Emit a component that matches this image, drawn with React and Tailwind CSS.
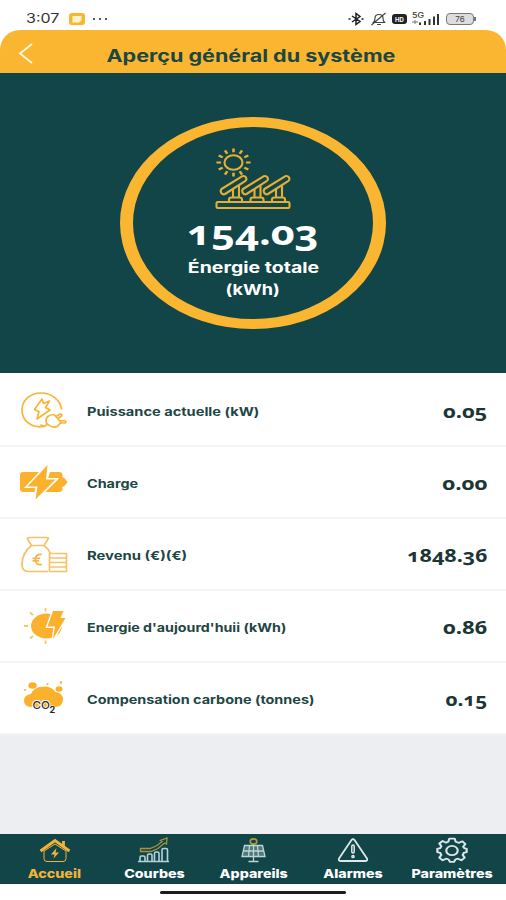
const rows = [
  { label: 'Puissance actuelle (kW)', value: '0.05', icon: PowerIcon, stretch: 'scale-x-[1.217]', valueStretch: 'scale-x-[1.22]' },
  { label: 'Charge', value: '0.00', icon: BatteryIcon, stretch: 'scale-x-[1.2]', valueStretch: 'scale-x-[1.24]' },
  { label: 'Revenu (€)(€)', value: '1848.36', icon: MoneyIcon, stretch: 'scale-x-[1.235]', valueStretch: 'scale-x-[1.19]' },
  { label: "Energie d'aujourd'huii (kWh)", value: '0.86', icon: SunBoltIcon, stretch: 'scale-x-[1.185]', valueStretch: 'scale-x-[1.22]' },
  { label: 'Compensation carbone (tonnes)', value: '0.15', icon: CarbonIcon, stretch: 'scale-x-[1.2]', valueStretch: 'scale-x-[1.15]' },
]

const tabs = [
  { label: 'Accueil', icon: HomeIcon, active: true },
  { label: 'Courbes', icon: ChartIcon },
  { label: 'Appareils', icon: PanelIcon },
  { label: 'Alarmes', icon: AlarmIcon },
  { label: 'Paramètres', icon: GearIcon },
]

const sunRays = Array.from({ length: 12 }, (_, i) => i * 30)

function SolarIcon() {
  return (
    <svg width="76" height="62" viewBox="0 0 76 62" fill="none" stroke="#e5ae35" strokeWidth="2.1" strokeLinejoin="round">
      <ellipse cx="18.5" cy="14.5" rx="9" ry="7.2" />
      <g transform="translate(18.5 14.5) scale(1.22 1)">
        {sunRays.map(a => (
          <path key={a} d="M0 -10.2V-14" transform={`rotate(${a})`} />
        ))}
      </g>
      {[0, 21.5, 43].map(x => (
        <g key={x} transform={`translate(${x} 0)`}>
          <path d="M6.500 41 27 28.300Q29.500 27.300 31 29.300Q32 31.600 30.500 32.800L10 46Q8 47 6.300 45Q5 42.800 6.500 41Z" />
          <path d="M18 41V49.500M24 37.500V49.500M14 53.500V51.500Q14 49.500 16.500 49.500H24.500Q27 49.500 27 51.500V53.500" />
        </g>
      ))}
      <rect x="1.5" y="54" width="73" height="6" rx="1.2" />
    </svg>
  )
}

function PowerIcon() {
  return (
    <svg width="50" height="40" viewBox="0 0 50 40" fill="none" stroke="#fab431" strokeWidth="1.7" strokeLinejoin="round" strokeLinecap="round">
      <path d="M26 36.500C13 38.500 4 30.500 4 20C4 10.500 12 3 23 3S42.500 10.500 43.500 19" />
      <path d="M24 9 16.500 19.500 21 21.500 19 29 32 20 27.500 17.500 31.500 11 25.500 13.500Z" />
      <path d="M23 35Q27 37.500 29.500 34Q34.500 39 40 36L43 32L36 24.500Q27.500 25 28 31.500Q28 33 29.500 34M38 26.500 42 24M41.500 31 46 30.500M42 24Q44.500 24 43.500 26L40 28.500M46 30.500Q49 31.500 47 33L43 33" />
    </svg>
  )
}

function BatteryIcon() {
  return (
    <svg width="50" height="40" viewBox="0 0 50 40" fill="#fbb12c">
      <path d="M5 10H23L11 25H17.500L16.500 30H5Q2 30 2 27V13Q2 10 5 10Z" />
      <path d="M32 10H41Q44.500 10 44.500 13V15.500H46L49.500 20L46 24.500H44.500V27Q44.500 30 41 30H27L41 16.500H30Z" />
      <path d="M29.500 3 9.500 24.500H19.500L17.500 37.500L37.500 17.500H28Z" stroke="#fff" strokeWidth="3" paintOrder="stroke" />
    </svg>
  )
}

function MoneyIcon() {
  return (
    <svg width="50" height="40" viewBox="0 0 50 40" fill="none" stroke="#f5c268" strokeWidth="1.7" strokeLinejoin="round">
      <path d="M13.500 11.500 9.500 5Q9 3.500 11.500 3.500H28.500Q31 3.500 30 5L26 11.500ZM13.500 11.500Q4 19 4 30.500Q4 37.500 10 37.500H30M26 11.500Q30.500 15 32.500 19.500" />
      <path d="M32.500 19.500H48.500V37.500H31.500V19.500ZM31.500 24H48.500M31.500 28.500H48.500M31.500 33H48.500" />
      <path d="M24 20.500Q17.500 19.500 17.500 25.500T24 30.500M14.500 24.400H22M14.500 26.800H21" stroke="#f4b549" />
    </svg>
  )
}

function SunBoltIcon() {
  return (
    <svg width="50" height="40" viewBox="0 0 50 40">
      <ellipse cx="28.500" cy="20" rx="15.500" ry="12.500" fill="#fbb12c" />
      <path d="M27.500 2V5.500M12 6.500 15 9M6 20H10M12 32.500 15 30M27.500 34.500V38" stroke="#f8c467" strokeWidth="1.8" />
      <path d="M35 5H45.500L42.500 12H47.500L35 33L37 20.500H29.500Z" fill="#fbb12c" stroke="#fff" strokeWidth="2.8" paintOrder="stroke" />
    </svg>
  )
}

function CarbonIcon() {
  return (
    <svg width="50" height="40" viewBox="0 0 50 40" fill="#fbb12c">
      <path d="M12 29Q6 28 6 22.500Q6 17 13 16Q16 8.500 26 8.500Q34 8.500 37.500 14Q45 15 45 21.500Q45 28 38 29Z" />
      <ellipse cx="14.500" cy="7.500" rx="4.200" ry="3.300" />
      <ellipse cx="41" cy="11" rx="3.500" ry="2.800" />
      <circle cx="29.500" cy="6" r="1" />
      <circle cx="43" cy="4.500" r="1.300" />
      <circle cx="7" cy="12" r="1" />
      <text x="14.500" y="31" textLength="17.500" lengthAdjust="spacingAndGlyphs" fontFamily="Inter, sans-serif" fontSize="11" fontWeight="500" fill="#333" stroke="#fff" strokeWidth="1.8" paintOrder="stroke">CO</text>
      <text x="31.500" y="35" fontFamily="Inter, sans-serif" fontSize="9" fontWeight="700" fill="#222" stroke="#fff" strokeWidth="1" paintOrder="stroke">2</text>
    </svg>
  )
}

function HomeIcon() {
  return (
    <svg width="32" height="26" viewBox="0 0 32 26" fill="none" stroke="#f2b33d">
      <path d="M1.500 14 16 3.500 30.500 14M24.500 9.500V4" strokeWidth="2.8" />
      <path d="M5 14V21.500Q5 24.500 8 24.500H24Q27 24.500 27 21.500V14L16 7Z" strokeWidth="1" />
      <path d="M17.500 11 12 17.500H15.500L14.500 21.500L20 15.500H16.500Z" fill="#f2b33d" stroke="none" />
    </svg>
  )
}

function ChartIcon() {
  return (
    <svg width="32" height="26" viewBox="0 0 32 26" fill="none" stroke="#b5d3d8" strokeWidth="1.6">
      <path d="M2 24V20.500Q2 19 3.500 19H5.500Q7 19 7 20.500V24M9.500 24V18.500Q9.500 17 11 17H12.500Q14 17 14 18.500V24M16.500 24V16.500Q16.500 15 18 15H19.500Q21 15 21 16.500V24M24 24V13Q24 11.500 25.500 11.500H28Q29.500 11.500 29.500 13V24M0 24.500H31" />
      <path d="M2.500 11.500H12L19 8.500L24 4.500L22.500 3.500L29 1L28.500 7L26.500 6L20 11.500L13 14.500H2.500Z" stroke="#a9923c" strokeWidth="1.3" />
    </svg>
  )
}

function PanelIcon() {
  return (
    <svg width="32" height="26" viewBox="0 0 32 26" fill="none" stroke="#bed5d8" strokeWidth="1.3">
      <ellipse cx="16.500" cy="4.500" rx="3.300" ry="2.600" stroke="#b8963b" strokeWidth="1.6" />
      <path d="M7.500 8.500H25.500L28 19.500H5Z" fill="#4d787c" />
      <path d="M6 14H27M12.500 8.500 11.500 19.500M20.500 8.500 21.500 19.500M16.500 8.500V24M11.500 24.500H21.500" />
    </svg>
  )
}

function AlarmIcon() {
  return (
    <svg width="32" height="26" viewBox="0 0 32 26" fill="none" stroke="#dde8e9" strokeWidth="1.8" strokeLinejoin="round">
      <path d="M14.500 3Q16 1.200 17.500 3L30 21.500Q31 24 28 24H4Q1 24 2 21.500Z" />
      <rect x="14.800" y="8" width="2.400" height="8" rx="1.200" strokeWidth="1.5" />
      <circle cx="16" cy="19.500" r="1.100" strokeWidth="1.5" />
    </svg>
  )
}

function GearIcon() {
  return (
    <svg width="32" height="26" viewBox="0 0 24 24" preserveAspectRatio="none" fill="none" stroke="#dbe6e8" strokeWidth="1.6" strokeLinejoin="round">
      <path d="M10 1.500H14L14.800 4.400L17.300 5.400L19.800 4L22 6.500L20.400 9L21.200 10.300L23 11V14L20.800 14.700L20 16.700L21.500 19L19 21.500L16.500 20L14.500 20.800L13.500 23H10.500L9.500 20.800L7.500 20L5 21.500L2.500 19L4 16.700L3.200 14.700L1 14V11L3.200 10.300L4 8.500L2.500 6L5 3.700L7.500 5.200L9.200 4.400Z" />
      <circle cx="12" cy="12.500" r="4.300" />
    </svg>
  )
}

function StatusBar() {
  return (
    <div className="flex h-[38px] items-start justify-between bg-white pl-[26px] pr-[30px] pt-[11px]">
      <div className="flex h-4 items-center">
        <span className="w-[42px] text-[13px] text-[#333]"><span className="inline-block origin-left scale-x-[1.23]">3:07</span></span>
        <svg width="18" height="14" viewBox="0 0 18 14">
          <rect x="1" y="1" width="16" height="12" rx="3" fill="#f8b72d" />
          <path d="M4.500 4H13.500V8.500L11 10.500H4.500Z" fill="#fff3d2" />
        </svg>
        <svg className="ml-1.5" width="16" height="4" viewBox="0 0 16 4" fill="#333">
          <circle cx="2" cy="2" r="1.1" /><circle cx="8" cy="2" r="1.1" /><circle cx="14" cy="2" r="1.1" />
        </svg>
      </div>
      <div className="flex h-4 items-center">
        <svg width="16" height="14" viewBox="0 0 16 14" fill="none" stroke="#222" strokeWidth="1.5">
          <path d="M4 4 12 9.500 8 12.500V1.500L12 4.500 4 10M.5 7H2.500M13.500 7H15.500" />
        </svg>
        <svg className="ml-[6px]" width="17" height="14" viewBox="0 0 17 14" fill="none" stroke="#444" strokeWidth="1.2">
          <path d="M3.500 10.500Q5 9 5 6Q5 2.500 9 2.500Q13 2.500 13 6Q13 9 14.500 10.500ZM7 12.500H11M1.500 13 15.500 1" />
        </svg>
        <span className="ml-[5px] flex h-[10px] w-[15px] items-center justify-center rounded-[3px] bg-[#222] text-[6px] font-bold text-white">HD</span>
        <svg className="ml-1" width="29" height="14" viewBox="0 0 29 14" fill="#333">
          <text x="1" y="6" fontSize="7" fontFamily="Inter, sans-serif" fontWeight="500" textLength="12" lengthAdjust="spacingAndGlyphs">5G</text>
          <path d="M1 10H7M4 8V12" stroke="#777" />
          <rect x="8" y="10.500" width="2" height="2.500" /><rect x="13" y="9" width="2" height="4" /><rect x="17.500" y="7" width="2" height="6" /><rect x="22" y="4.500" width="2" height="8.500" /><rect x="26" y="2" width="2" height="11" />
        </svg>
        <span className="ml-1.5 flex h-[12px] w-[28px] items-center justify-center rounded-[4px] border border-[#777] bg-[#ddd] text-[8px] leading-none text-[#444]">76</span>
        <span className="h-1 w-0.5 bg-[#777]" />
      </div>
    </div>
  )
}

export default function App() {
  return (
    <div className="flex h-[900px] w-[506px] flex-col overflow-hidden bg-white font-['Inter',sans-serif]">
      <StatusBar />

      {/* Header */}
      <header className="-mt-2 flex h-[43px] shrink-0 items-center rounded-t-[20px] bg-[#fbb631] pt-1">
        <svg className="ml-[18px]" width="16" height="22" viewBox="0 0 16 22" fill="none" stroke="#fff7e6" strokeWidth="1.8">
          <path d="M14 1 2 10.500 14 20" />
        </svg>
        <h1 className="mr-[38px] flex-1 pt-1 text-center text-[17px] font-bold leading-6 text-[#1c4641]">
          <span className="inline-block scale-x-[1.268] whitespace-nowrap">Aperçu général du système</span>
        </h1>
      </header>

      {/* Total energy */}
      <section className="flex h-[300px] shrink-0 justify-center bg-[#124548] pt-[44px]">
        <div className="flex h-[212px] w-[266px] flex-col items-center rounded-[50%] border-x-[13px] border-y-[10px] border-[#fbb631] pt-[21px] text-white">
          <SolarIcon />
          <p className="font-['Open_Sans',sans-serif] text-[34px] font-bold leading-[45px] oldstyle-nums">
            <span className="inline-block scale-x-[1.22]">154.03</span>
          </p>
          <p className="pt-0.5 text-[15px] font-bold leading-[22px]"><span className="inline-block scale-x-[1.3] whitespace-nowrap">Énergie totale</span></p>
          <p className="text-[15px] font-bold leading-[22px]"><span className="inline-block scale-x-[1.2]">(kWh)</span></p>
        </div>
      </section>

      {/* Metrics */}
      <ul className="shrink-0 pt-0.5">
        {rows.map(({ label, value, icon: Icon, stretch, valueStretch }) => (
          <li key={label} className="flex h-[72px] items-center border-b-2 border-[#f4f4f4] pl-[18px] pr-[19px]">
            <Icon />
            <span className="ml-[19px] flex-1 pt-[3px] text-[12px] font-bold text-[#1d4645]">
              <span className={`inline-block origin-left whitespace-nowrap ${stretch}`}>{label}</span>
            </span>
            <span className="pt-[3px] font-['Open_Sans',sans-serif] text-[18px] font-bold text-[#1b3635] oldstyle-nums">
              <span className={`inline-block origin-right ${valueStretch}`}>{value}</span>
            </span>
          </li>
        ))}
      </ul>

      <div className="flex-1 bg-[#edeef2]" />

      {/* Tab bar */}
      <nav className="flex h-[50px] shrink-0 bg-[#124548] pl-[5px]">
        {tabs.map(({ label, icon: Icon, active }) => (
          <div key={label} className={`flex w-[99.4px] flex-col items-center pt-[3px] text-[12px] font-extrabold leading-[21px] ${active ? 'text-[#f2b33d]' : 'text-white'}`}>
            <Icon />
            <span className="inline-block scale-x-[1.19]">{label}</span>
          </div>
        ))}
      </nav>
      <div className="flex h-4 shrink-0 justify-center pt-[7px]">
        <div className="h-[3px] w-[186px] rounded-full bg-[#1c1c1c]" />
      </div>
    </div>
  )
}
